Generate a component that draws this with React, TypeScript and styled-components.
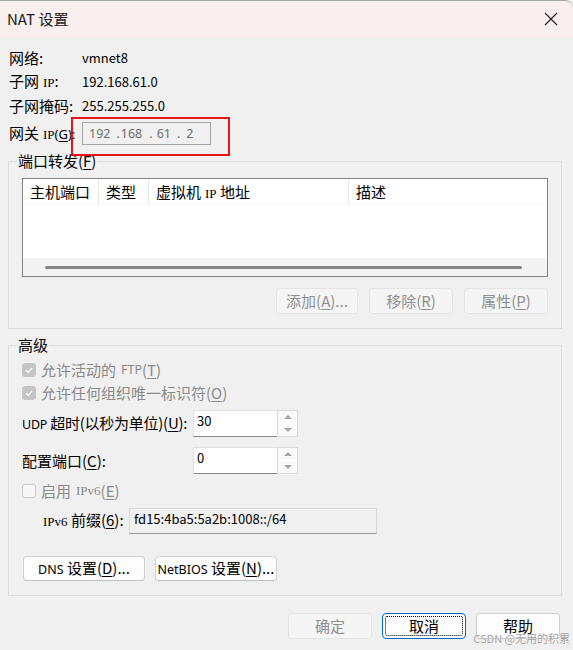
import React from "react";
import styled, { createGlobalStyle, css } from "styled-components";

const Global = createGlobalStyle`
  html, body { margin: 0; padding: 0; background: #f0f0f0; }
  body { font-family: "Noto Sans CJK SC", "Noto Sans", sans-serif; }
  * { box-sizing: border-box; }
`;

const Window = styled.div`
  position: relative;
  width: 573px;
  height: 650px;
  overflow: hidden;
  background: #f0f0f0;
  display: flex;
  flex-direction: column;
  font-family: "Noto Sans CJK SC", "Noto Sans", sans-serif;
  font-size: 15px;
  line-height: 20px;
  color: #000;
  white-space: nowrap;
`;

const TitleBar = styled.div`
  height: 37px;
  flex: none;
  border-top: 1px solid #a9a9a9;
  border-top-right-radius: 8px;
  background: #f9efee;
  display: flex;
  align-items: center;
  justify-content: space-between;
  padding: 0 15px 0 7px;
`;

const Title = styled.div`
  font-size: 15px;
  color: #1a1a1a;
`;

const Close = styled.svg`
  width: 14px;
  height: 14px;
`;

const Body = styled.div`
  flex: 1;
  display: flex;
  flex-direction: column;
  padding: 9px 11px 0 8px;
`;

const InfoGrid = styled.div`
  display: grid;
  grid-template-columns: 73px 1fr;
  grid-auto-rows: 24px;
  align-items: center;
  padding-left: 1px;
`;

const Value = styled.div`
  font-size: 13px;
`;

const Serif = styled.span<{ $gap?: number }>`
  font-family: "Liberation Serif", "DejaVu Serif", serif;
  font-size: 13px;
  margin-left: ${(p) => p.$gap ?? 0}px;
`;

const Latin = styled.span<{ $gap?: number; $size?: number }>`
  font-family: "Noto Sans", sans-serif;
  font-size: ${(p) => p.$size ?? 12.5}px;
  margin-left: ${(p) => p.$gap ?? 0}px;
`;

const Mn = styled.span`
  text-decoration: underline;
  text-underline-offset: 2px;
`;

const GatewayRow = styled.div`
  display: flex;
  align-items: center;
  height: 31px;
  padding-left: 1px;
  gap: 6px;
`;

const GatewayLabel = styled.div`
  width: 67px;
  flex: none;
`;

const Highlight = styled.div`
  position: relative;
  height: 23px;
  display: flex;
  align-items: center;
`;

const RedBox = styled.div`
  position: absolute;
  left: -11px;
  top: -5px;
  width: 159px;
  height: 39px;
  border: 2px solid #e4151b;
  pointer-events: none;
`;

const IpBox = styled.div`
  width: 129px;
  height: 23px;
  border: 1px solid #a6a6a6;
  background: #f0f0f0;
  color: #6e6e6e;
  font-family: "Noto Sans", sans-serif;
  font-size: 12.5px;
  line-height: 21px;
  padding-left: 6px;
  display: flex;
`;

const Octet = styled.span<{ $ml: number }>`
  margin-left: ${(p) => p.$ml}px;
`;

const Group = styled.fieldset<{ $gap?: number }>`
  margin: ${(p) => p.$gap ?? 0}px 0 0 0;
  width: 554px;
  border: 1px solid #dcdcdc;
  padding: 0 13px 14px 13px;
  min-width: 0;
`;

const Legend = styled.legend`
  margin-left: -5px;
  padding: 0 1px;
  line-height: 20px;
  font-size: 15px;
`;

const Table = styled.div`
  margin-top: 7px;
  height: 99px;
  border: 1px solid #828282;
  background: #fff;
  display: flex;
  flex-direction: column;
`;

const HeaderRow = styled.div`
  display: grid;
  grid-template-columns: 76px 50px 200px 1fr;
  height: 26px;
  background: #fff;
  border-bottom: 1px solid #f7f7f7;
`;

const HeaderCell = styled.div<{ $last?: boolean }>`
  padding-left: 7px;
  line-height: 25px;
  border-right: ${(p) => (p.$last ? "none" : "1px solid #e5e5e5")};
`;

const TableBody = styled.div`
  flex: 1;
  background: #fff;
`;

const HScroll = styled.div`
  height: 19px;
  border-top: 1px solid #fff;
  background: #f3f3f3;
  display: flex;
  align-items: center;
  padding: 0 25px 0 22px;
`;

const Thumb = styled.div`
  flex: 1;
  height: 3px;
  border-radius: 2px;
  background: #858585;
`;

const ButtonRow = styled.div<{ $justify?: string; $gap: number; $top: number; $left?: number }>`
  display: flex;
  justify-content: ${(p) => p.$justify ?? "flex-end"};
  gap: ${(p) => p.$gap}px;
  margin-top: ${(p) => p.$top}px;
  padding-left: ${(p) => p.$left ?? 0}px;
`;

const Button = styled.button<{ $w: number; $h?: number; $disabled?: boolean; $focus?: boolean }>`
  position: relative;
  width: ${(p) => p.$w}px;
  height: ${(p) => p.$h ?? 26}px;
  padding: 0;
  border-radius: 4px;
  font-family: inherit;
  font-size: 15px;
  line-height: 20px;
  background: #fdfdfd;
  color: #000;
  border: 1px solid #d0d0d0;
  border-bottom-color: #c0c0c0;
  ${(p) =>
    p.$disabled &&
    css`
      background: #f5f5f5;
      color: #8f8f8f;
      border-color: #e4e4e4;
    `}
  ${(p) =>
    p.$focus &&
    css`
      border: 1px solid #0067c0;
      background: #fdfdfd;
      &::after {
        content: "";
        position: absolute;
        inset: 2px;
        border: 1px dotted #000;
        border-radius: 2px;
      }
    `}
`;

const CheckRow = styled.div<{ $top?: number }>`
  display: flex;
  align-items: center;
  height: 23px;
  margin-top: ${(p) => p.$top ?? 0}px;
  color: #8a8a8a;
`;

const Box = styled.span<{ $checked?: boolean }>`
  width: 14px;
  height: 14px;
  border-radius: 3px;
  margin-right: 5px;
  display: inline-flex;
  align-items: center;
  justify-content: center;
  ${(p) =>
    p.$checked
      ? css`
          background: #c5c5c5;
          border: 1px solid #c5c5c5;
        `
      : css`
          background: #f7f7f7;
          border: 1px solid #c9c9c9;
        `}
`;

const FieldRow = styled.div<{ $top: number; $indent?: number }>`
  display: flex;
  align-items: center;
  margin-top: ${(p) => p.$top}px;
  padding-left: ${(p) => p.$indent ?? 0}px;
`;

const FieldLabel = styled.div<{ $w: number; $tight?: boolean }>`
  width: ${(p) => p.$w}px;
  flex: none;
  letter-spacing: ${(p) => (p.$tight ? "-0.25px" : "0")};
`;

const Spin = styled.div`
  display: flex;
  width: 105px;
  height: 27px;
`;

const SpinInput = styled.div`
  flex: 1;
  background: #fff;
  border: 1px solid #e0e0e0;
  border-right: none;
  border-bottom: 1px solid #8a8a8a;
  padding: 0 0 0 3px;
  font-size: 13px;
  line-height: 20px;
`;

const SpinBtns = styled.div`
  width: 21px;
  display: flex;
  flex-direction: column;
  border: 1px solid #dadada;
  background: #fff;
`;

const SpinHalf = styled.div<{ $down?: boolean }>`
  flex: 1;
  display: flex;
  align-items: center;
  justify-content: center;
  background: #f9f9f9;
  border-top: ${(p) => (p.$down ? "1px solid #fff" : "none")};
  &::before {
    content: "";
    width: 0;
    height: 0;
    border-left: 4px solid transparent;
    border-right: 4px solid transparent;
    ${(p) =>
      p.$down
        ? css`
            border-top: 4px solid #a6a6a6;
          `
        : css`
            border-bottom: 4px solid #a6a6a6;
          `}
  }
`;

const PrefixBox = styled.div`
  width: 248px;
  height: 26px;
  background: #f0f0f0;
  border: 1px solid #d9d9d9;
  border-bottom-color: #9c9c9c;
  padding-left: 4px;
  font-size: 13px;
  line-height: 20px;
`;

const Footer = styled.div`
  display: flex;
  justify-content: flex-end;
  gap: 10px;
  margin-top: 17px;
  padding-right: 2px;
`;

const Watermark = styled.div`
  position: absolute;
  right: 3px;
  bottom: 5px;
  font-size: 11px;
  line-height: 14px;
  color: #a3a3a3;
  text-shadow: 0 0 1px #fff, 0 0 1px #fff;
  pointer-events: none;
`;

const Check = () => (
  <svg width="10" height="10" viewBox="0 0 10 10">
    <path d="M2 5.2 L4.2 7.3 L8.2 2.8" fill="none" stroke="#fff" strokeWidth="1.2" />
  </svg>
);

export default function App() {
  return (
    <>
      <Global />
      <Window>
        <TitleBar>
          <Title>NAT 设置</Title>
          <Close viewBox="0 0 14 14">
            <path d="M1 1 L13 13 M13 1 L1 13" stroke="#1a1a1a" strokeWidth="1.1" />
          </Close>
        </TitleBar>
        <Body>
          <InfoGrid>
            <div>网络:</div>
            <Value>vmnet8</Value>
            <div>
              子网<Serif $gap={4}>IP</Serif>:
            </div>
            <Value>192.168.61.0</Value>
            <div>子网掩码:</div>
            <Value>255.255.255.0</Value>
          </InfoGrid>
          <GatewayRow>
            <GatewayLabel>
              网关<Serif $gap={4}>IP</Serif>
              <Latin $size={13}>
                (<Mn>G</Mn>):
              </Latin>
            </GatewayLabel>
            <Highlight>
              <IpBox>
                <Octet $ml={0}>192</Octet>
                <Octet $ml={6}>.</Octet>
                <Octet $ml={1}>168</Octet>
                <Octet $ml={7}>.</Octet>
                <Octet $ml={4}>61</Octet>
                <Octet $ml={6}>.</Octet>
                <Octet $ml={6}>2</Octet>
              </IpBox>
              <RedBox />
            </Highlight>
          </GatewayRow>

          <Group $gap={2}>
            <Legend>
              端口转发(<Mn>F</Mn>)
            </Legend>
            <Table>
              <HeaderRow>
                <HeaderCell>主机端口</HeaderCell>
                <HeaderCell>类型</HeaderCell>
                <HeaderCell>
                  虚拟机<Serif $gap={4}>IP</Serif> 地址
                </HeaderCell>
                <HeaderCell $last>描述</HeaderCell>
              </HeaderRow>
              <TableBody />
              <HScroll>
                <Thumb />
              </HScroll>
            </Table>
            <ButtonRow $gap={11} $top={11}>
              <Button $w={82} $disabled>
                添加(<Mn>A</Mn>)...
              </Button>
              <Button $w={84} $disabled>
                移除(<Mn>R</Mn>)
              </Button>
              <Button $w={84} $disabled>
                属性(<Mn>P</Mn>)
              </Button>
            </ButtonRow>
          </Group>

          <Group $gap={6}>
            <Legend>高级</Legend>
            <CheckRow $top={3}>
              <Box $checked>
                <Check />
              </Box>
              允许活动的<Latin $gap={5}>FTP</Latin>(<Mn>T</Mn>)
            </CheckRow>
            <CheckRow>
              <Box $checked>
                <Check />
              </Box>
              允许任何组织唯一标识符(<Mn>O</Mn>)
            </CheckRow>
            <FieldRow $top={6}>
              <FieldLabel $w={171} $tight>
                <Latin>UDP</Latin> 超时(以秒为单位)(<Mn>U</Mn>):
              </FieldLabel>
              <Spin>
                <SpinInput>30</SpinInput>
                <SpinBtns>
                  <SpinHalf />
                  <SpinHalf $down />
                </SpinBtns>
              </Spin>
            </FieldRow>
            <FieldRow $top={10}>
              <FieldLabel $w={171}>
                配置端口(<Mn>C</Mn>):
              </FieldLabel>
              <Spin>
                <SpinInput>0</SpinInput>
                <SpinBtns>
                  <SpinHalf />
                  <SpinHalf $down />
                </SpinBtns>
              </Spin>
            </FieldRow>
            <CheckRow $top={5}>
              <Box />
              启用<Serif $gap={5}>IPv6</Serif>(<Mn>E</Mn>)
            </CheckRow>
            <FieldRow $top={6} $indent={21}>
              <FieldLabel $w={86}>
                <Serif>IPv6</Serif> 前缀(<Mn>6</Mn>):
              </FieldLabel>
              <PrefixBox>fd15:4ba5:5a2b:1008::/64</PrefixBox>
            </FieldRow>
            <ButtonRow $justify="flex-start" $gap={10} $top={22} $left={1}>
              <Button $w={122} $h={25}>
                <Latin>DNS</Latin> 设置(<Mn>D</Mn>)...
              </Button>
              <Button $w={122} $h={25}>
                <Latin>NetBIOS</Latin> 设置(<Mn>N</Mn>)...
              </Button>
            </ButtonRow>
          </Group>

          <Footer>
            <Button $w={84} $disabled>
              确定
            </Button>
            <Button $w={84} $focus>
              取消
            </Button>
            <Button $w={84}>帮助</Button>
          </Footer>
        </Body>
        <Watermark>CSDN @无用的积累</Watermark>
      </Window>
    </>
  );
}
